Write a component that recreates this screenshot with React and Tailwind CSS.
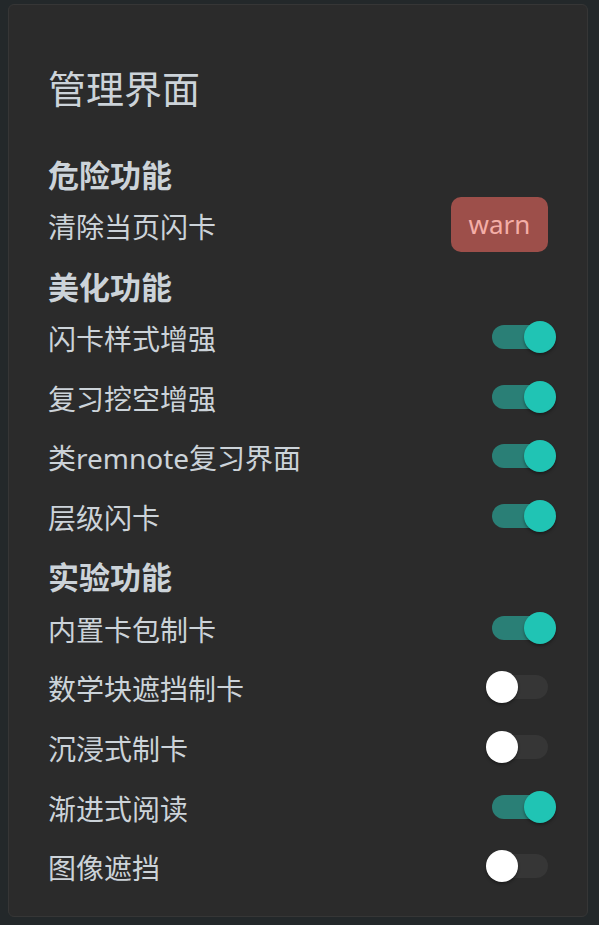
import React from "react";

function Toggle({ on }) {
  return (
    <div className="relative w-[56px] h-[24px] shrink-0 mb-[4px]">
      <div
        className={
          on
            ? "absolute inset-0 rounded-full bg-[#2a7f76]"
            : "absolute inset-0 rounded-full bg-[#363636]"
        }
      />
      <div
        className={
          on
            ? "absolute top-[-4px] left-[32px] w-[32px] h-[32px] rounded-full bg-[#20c4b4] shadow-[0_2px_3px_rgba(0,0,0,0.35)]"
            : "absolute top-[-4px] left-[-6px] w-[32px] h-[32px] rounded-full bg-white shadow-[0_2px_3px_rgba(0,0,0,0.35)]"
        }
      />
    </div>
  );
}

function Header({ children }) {
  return (
    <div className="mt-[8px] h-[44px] flex items-center text-[31px] font-bold leading-none">
      {children}
    </div>
  );
}

function Item({ label, children }) {
  return (
    <div className="h-[60px] flex items-center justify-between">
      <span className="text-[28px] leading-none">{label}</span>
      {children}
    </div>
  );
}

export default function App() {
  return (
    <div
      className="w-[599px] h-[925px] bg-[#23282a] pt-[4px] pl-[8px] pr-[11px] pb-[8px] text-[#ccd3d9]"
      style={{ fontFamily: '"Noto Sans", "Noto Sans CJK SC", sans-serif' }}
    >
      <div className="h-full rounded-[6px] border border-[#363636] bg-[#2b2b2b] pt-[59px] px-[39px] pb-[18px] flex flex-col">
        <div className="h-[48px] flex items-center text-[38px] leading-none mb-[34px]">
          管理界面
        </div>
        <Header>危险功能</Header>
        <Item label="清除当页闪卡">
          <button className="w-[97px] h-[55px] mb-[6px] rounded-[10px] bg-[#9d4f4a] text-[#f4aea7] text-[26px] leading-none flex items-center justify-center">
            warn
          </button>
        </Item>
        <Header>美化功能</Header>
        <Item label="闪卡样式增强">
          <Toggle on />
        </Item>
        <Item label="复习挖空增强">
          <Toggle on />
        </Item>
        <Item label="类remnote复习界面">
          <Toggle on />
        </Item>
        <Item label="层级闪卡">
          <Toggle on />
        </Item>
        <Header>实验功能</Header>
        <Item label="内置卡包制卡">
          <Toggle on />
        </Item>
        <Item label="数学块遮挡制卡">
          <Toggle />
        </Item>
        <Item label="沉浸式制卡">
          <Toggle />
        </Item>
        <Item label="渐进式阅读">
          <Toggle on />
        </Item>
        <Item label="图像遮挡">
          <Toggle />
        </Item>
      </div>
    </div>
  );
}
